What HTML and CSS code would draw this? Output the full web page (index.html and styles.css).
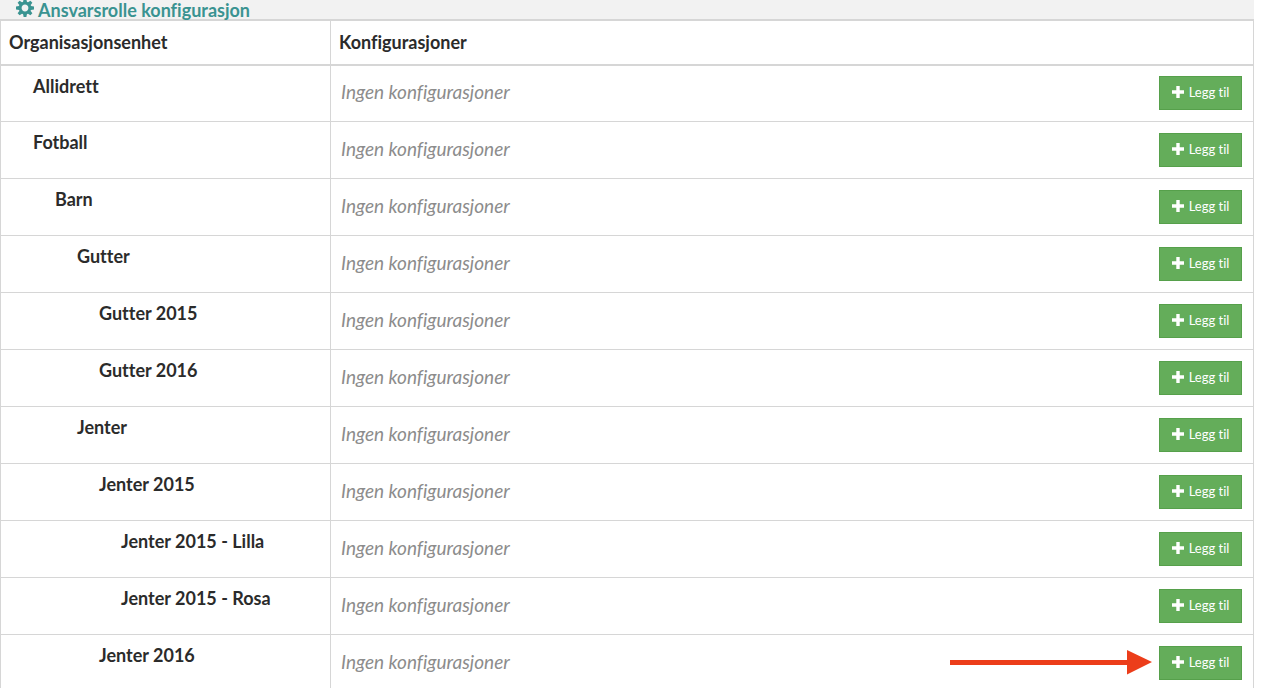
FILE: index.html
```
<!DOCTYPE html>
<html lang="no">
<head>
    <meta charset="utf-8" />
    <meta name="viewport" content="width=device-width, initial-scale=1" />
    <title>Ansvarsrolle konfigurasjon</title>
    <link rel="stylesheet" href="styles.css">
</head>
<body>

<svg class="sprite" aria-hidden="true">
    <symbol id="icon-plus" viewBox="0 0 12 12">
        <path d="M4.3 0h3.4v4.3H12v3.4H7.7V12H4.3V7.7H0V4.3h4.3z"/>
    </symbol>
</svg>

<div class="panel">
    <h1 class="panel-heading">
        <svg class="icon-cog" viewBox="-9 -9 18 18" aria-hidden="true">
            <circle r="4.9" fill="none" stroke="currentColor" stroke-width="3"/>
            <g fill="currentColor">
                <path d="M-2 -5.8L-1.4 -9H1.4L2 -5.8z"/>
                <path d="M-2 -5.8L-1.4 -9H1.4L2 -5.8z" transform="rotate(45)"/>
                <path d="M-2 -5.8L-1.4 -9H1.4L2 -5.8z" transform="rotate(90)"/>
                <path d="M-2 -5.8L-1.4 -9H1.4L2 -5.8z" transform="rotate(135)"/>
                <path d="M-2 -5.8L-1.4 -9H1.4L2 -5.8z" transform="rotate(180)"/>
                <path d="M-2 -5.8L-1.4 -9H1.4L2 -5.8z" transform="rotate(225)"/>
                <path d="M-2 -5.8L-1.4 -9H1.4L2 -5.8z" transform="rotate(270)"/>
                <path d="M-2 -5.8L-1.4 -9H1.4L2 -5.8z" transform="rotate(315)"/>
            </g>
        </svg>
        Ansvarsrolle konfigurasjon
    </h1>

    <table class="config-table">
        <thead>
            <tr>
                <th class="col-unit" scope="col">Organisasjonsenhet</th>
                <th scope="col">Konfigurasjoner</th>
            </tr>
        </thead>
        <tbody>
            <tr>
                <th class="unit level-1" scope="row">Allidrett</th>
                <td><div class="config"><em>Ingen konfigurasjoner</em><button type="button" class="btn-add"><svg class="icon-plus"><use href="#icon-plus"/></svg>Legg til</button></div></td>
            </tr>
            <tr>
                <th class="unit level-1" scope="row">Fotball</th>
                <td><div class="config"><em>Ingen konfigurasjoner</em><button type="button" class="btn-add"><svg class="icon-plus"><use href="#icon-plus"/></svg>Legg til</button></div></td>
            </tr>
            <tr>
                <th class="unit level-2" scope="row">Barn</th>
                <td><div class="config"><em>Ingen konfigurasjoner</em><button type="button" class="btn-add"><svg class="icon-plus"><use href="#icon-plus"/></svg>Legg til</button></div></td>
            </tr>
            <tr>
                <th class="unit level-3" scope="row">Gutter</th>
                <td><div class="config"><em>Ingen konfigurasjoner</em><button type="button" class="btn-add"><svg class="icon-plus"><use href="#icon-plus"/></svg>Legg til</button></div></td>
            </tr>
            <tr>
                <th class="unit level-4" scope="row">Gutter 2015</th>
                <td><div class="config"><em>Ingen konfigurasjoner</em><button type="button" class="btn-add"><svg class="icon-plus"><use href="#icon-plus"/></svg>Legg til</button></div></td>
            </tr>
            <tr>
                <th class="unit level-4" scope="row">Gutter 2016</th>
                <td><div class="config"><em>Ingen konfigurasjoner</em><button type="button" class="btn-add"><svg class="icon-plus"><use href="#icon-plus"/></svg>Legg til</button></div></td>
            </tr>
            <tr>
                <th class="unit level-3" scope="row">Jenter</th>
                <td><div class="config"><em>Ingen konfigurasjoner</em><button type="button" class="btn-add"><svg class="icon-plus"><use href="#icon-plus"/></svg>Legg til</button></div></td>
            </tr>
            <tr>
                <th class="unit level-4" scope="row">Jenter 2015</th>
                <td><div class="config"><em>Ingen konfigurasjoner</em><button type="button" class="btn-add"><svg class="icon-plus"><use href="#icon-plus"/></svg>Legg til</button></div></td>
            </tr>
            <tr>
                <th class="unit level-5" scope="row">Jenter 2015 - Lilla</th>
                <td><div class="config"><em>Ingen konfigurasjoner</em><button type="button" class="btn-add"><svg class="icon-plus"><use href="#icon-plus"/></svg>Legg til</button></div></td>
            </tr>
            <tr>
                <th class="unit level-5" scope="row">Jenter 2015 - Rosa</th>
                <td><div class="config"><em>Ingen konfigurasjoner</em><button type="button" class="btn-add"><svg class="icon-plus"><use href="#icon-plus"/></svg>Legg til</button></div></td>
            </tr>
            <tr>
                <th class="unit level-4" scope="row">Jenter 2016</th>
                <td>
                    <div class="config">
                        <em>Ingen konfigurasjoner</em>
                        <svg class="arrow" viewBox="0 0 202 26" aria-hidden="true">
                            <path d="M0 10h177V0L202 12L177 24.5V15H0z"/>
                        </svg>
                        <button type="button" class="btn-add"><svg class="icon-plus"><use href="#icon-plus"/></svg>Legg til</button>
                    </div>
                </td>
            </tr>
        </tbody>
    </table>
</div>

</body>
</html>
```

FILE: styles.css
```
* {
    box-sizing: border-box;
    margin: 0;
    padding: 0;
}

body {
    overflow: hidden;
    background-color: white;
    color: #2b2b2b;
    font-family: Lato, "Open Sans", sans-serif;
    font-size: 18px;
    font-variant-ligatures: none;
    line-height: 24px;
}

.sprite {
    display: none;
}

.panel {
    margin-right: 19px;
    background-color: #f2f2f2;
}

.panel-heading {
    display: flex;
    align-items: center;
    gap: 4px;
    height: 19px;
    padding-left: 16px;
    color: #3a9391;
    font-size: 18px;
    line-height: 18px;
}

.icon-cog {
    width: 18px;
    height: 18px;
    margin-bottom: 4px;
}

.config-table {
    width: 100%;
    border-collapse: collapse;
    background-color: white;
}

.config-table th,
.config-table td {
    border: 1px solid #d6d6d6;
    text-align: left;
}

.config-table thead th {
    height: 45px;
    padding: 0 8px 2px;
    border-top-width: 2px;
    border-bottom-width: 2px;
}

.config-table .col-unit {
    width: 330px;
}

.config-table tbody tr {
    height: 57px;
}

.config-table tbody tr:first-child {
    height: 56px;
}

.config-table .unit {
    padding-top: 8px;
    vertical-align: top;
}

.config-table .level-1 { padding-left: 32px; }
.config-table .level-2 { padding-left: 54px; }
.config-table .level-3 { padding-left: 76px; }
.config-table .level-4 { padding-left: 98px; }
.config-table .level-5 { padding-left: 120px; }

.config {
    position: relative;
    display: flex;
    align-items: center;
    justify-content: space-between;
    padding: 0 11px 0 10px;
    color: #8c8c8c;
}

.config em {
    padding-bottom: 2px;
    font-size: 19px;
}

.btn-add {
    display: flex;
    align-items: center;
    justify-content: center;
    gap: 5px;
    width: 83px;
    height: 34px;
    padding-bottom: 2px;
    border: 1px solid #56a04b;
    background-color: #64ad5a;
    color: white;
    font-family: inherit;
    font-size: 13px;
    font-variant-ligatures: none;
    cursor: pointer;
}

.icon-plus {
    width: 12px;
    height: 12px;
    fill: currentColor;
}

/* Points at the last add button */
.arrow {
    position: absolute;
    right: 101px;
    width: 202px;
    height: 26px;
    fill: #ec3d1a;
}
```
